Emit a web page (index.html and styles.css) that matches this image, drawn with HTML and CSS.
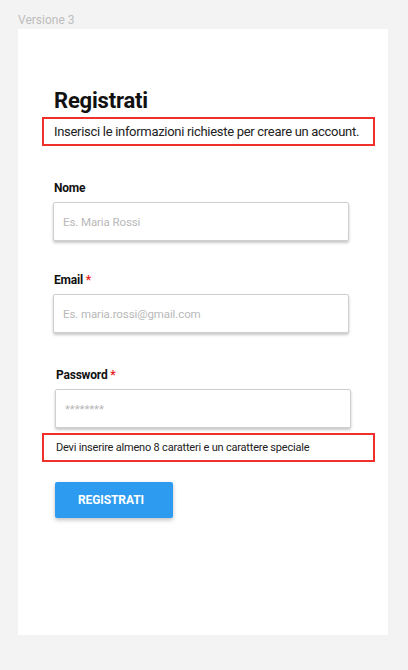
FILE: index.html
```html
<!DOCTYPE html>
<html>
<head>
<title>Registrati</title>
<meta charset="UTF-8">
<meta name="viewport" content="width=device-width, initial-scale=1.0">
<link rel="stylesheet" href="styles.css">
</head>
<body>
<div class="page">
<div class="version">Versione 3</div>
<div class="card">
<h1>Registrati</h1>
<div class="note intro">Inserisci le informazioni richieste per creare un account.</div>
<div class="field field-nome">
<label for="nome">Nome</label>
<input type="text" id="nome" placeholder="Es. Maria Rossi">
</div>
<div class="field field-email">
<label for="email">Email <span class="req">*</span></label>
<input type="email" id="email" placeholder="Es. maria.rossi@gmail.com">
</div>
<div class="field field-pwd">
<label for="pwd">Password <span class="req">*</span></label>
<input type="text" id="pwd" placeholder="********">
</div>
<div class="note hint">Devi inserire almeno 8 caratteri e un carattere speciale</div>
<button class="btn">REGISTRATI</button>
</div>
</div>
</body>
</html>
```

FILE: styles.css
```css
body {
    margin: 0;
    background-color: #f3f3f3;
    font-family: Roboto, "Liberation Sans", sans-serif;
    color: #111;
}
.page {
    padding: 12px 0 0 18px;
}
.version {
    font-size: 12px;
    line-height: 16px;
    color: #bdbdbd;
    margin-bottom: 1px;
}
.card {
    width: 370px;
    height: 606px;
    box-sizing: border-box;
    background-color: #fff;
    padding: 58px 0 0 36px;
}
h1 {
    margin: 0;
    font-size: 22px;
    line-height: 28px;
    font-weight: 700;
    letter-spacing: -0.2px;
}
.note {
    border: 2px solid #f0302a;
    margin-left: -12px;
    width: 333px;
    box-sizing: border-box;
    color: #222;
    white-space: nowrap;
}
.intro {
    margin-top: 2px;
    height: 29px;
    padding: 4px 0 0 10px;
    font-size: 13px;
    line-height: 18px;
    letter-spacing: -0.3px;
}
.field label {
    display: block;
    font-size: 12px;
    font-weight: 700;
    line-height: 16px;
    margin-bottom: 6px;
    letter-spacing: -0.2px;
}
.req {
    color: #e8201c;
}
.field input {
    display: block;
    width: 296px;
    height: 39px;
    box-sizing: border-box;
    margin-left: -1px;
    border: 1px solid #cfcfcf;
    border-radius: 2px;
    box-shadow: 0 2px 3px rgba(0, 0, 0, 0.22);
    padding: 0 9px;
    font-family: inherit;
    font-size: 11.5px;
    letter-spacing: -0.1px;
    outline: none;
}
.field input::placeholder {
    color: #b8b8b8;
}
.field-nome {
    margin-top: 34px;
}
.field-email {
    margin-top: 31px;
}
.field-pwd {
    margin-top: 34px;
    margin-left: 2px;
}
.hint {
    margin-top: 5px;
    height: 29px;
    padding: 4px 0 0 12px;
    font-size: 11px;
    line-height: 17px;
    letter-spacing: -0.2px;
}
.btn {
    display: block;
    margin: 20px 0 0 1px;
    width: 118px;
    height: 36px;
    border: none;
    border-radius: 2px;
    background-color: #2d9cf0;
    color: #fff;
    font-family: inherit;
    font-size: 12px;
    font-weight: 700;
    letter-spacing: -0.1px;
    text-align: left;
    padding: 0 0 0 23px;
    box-shadow: 0 2px 4px rgba(0, 0, 0, 0.25);
}
```
